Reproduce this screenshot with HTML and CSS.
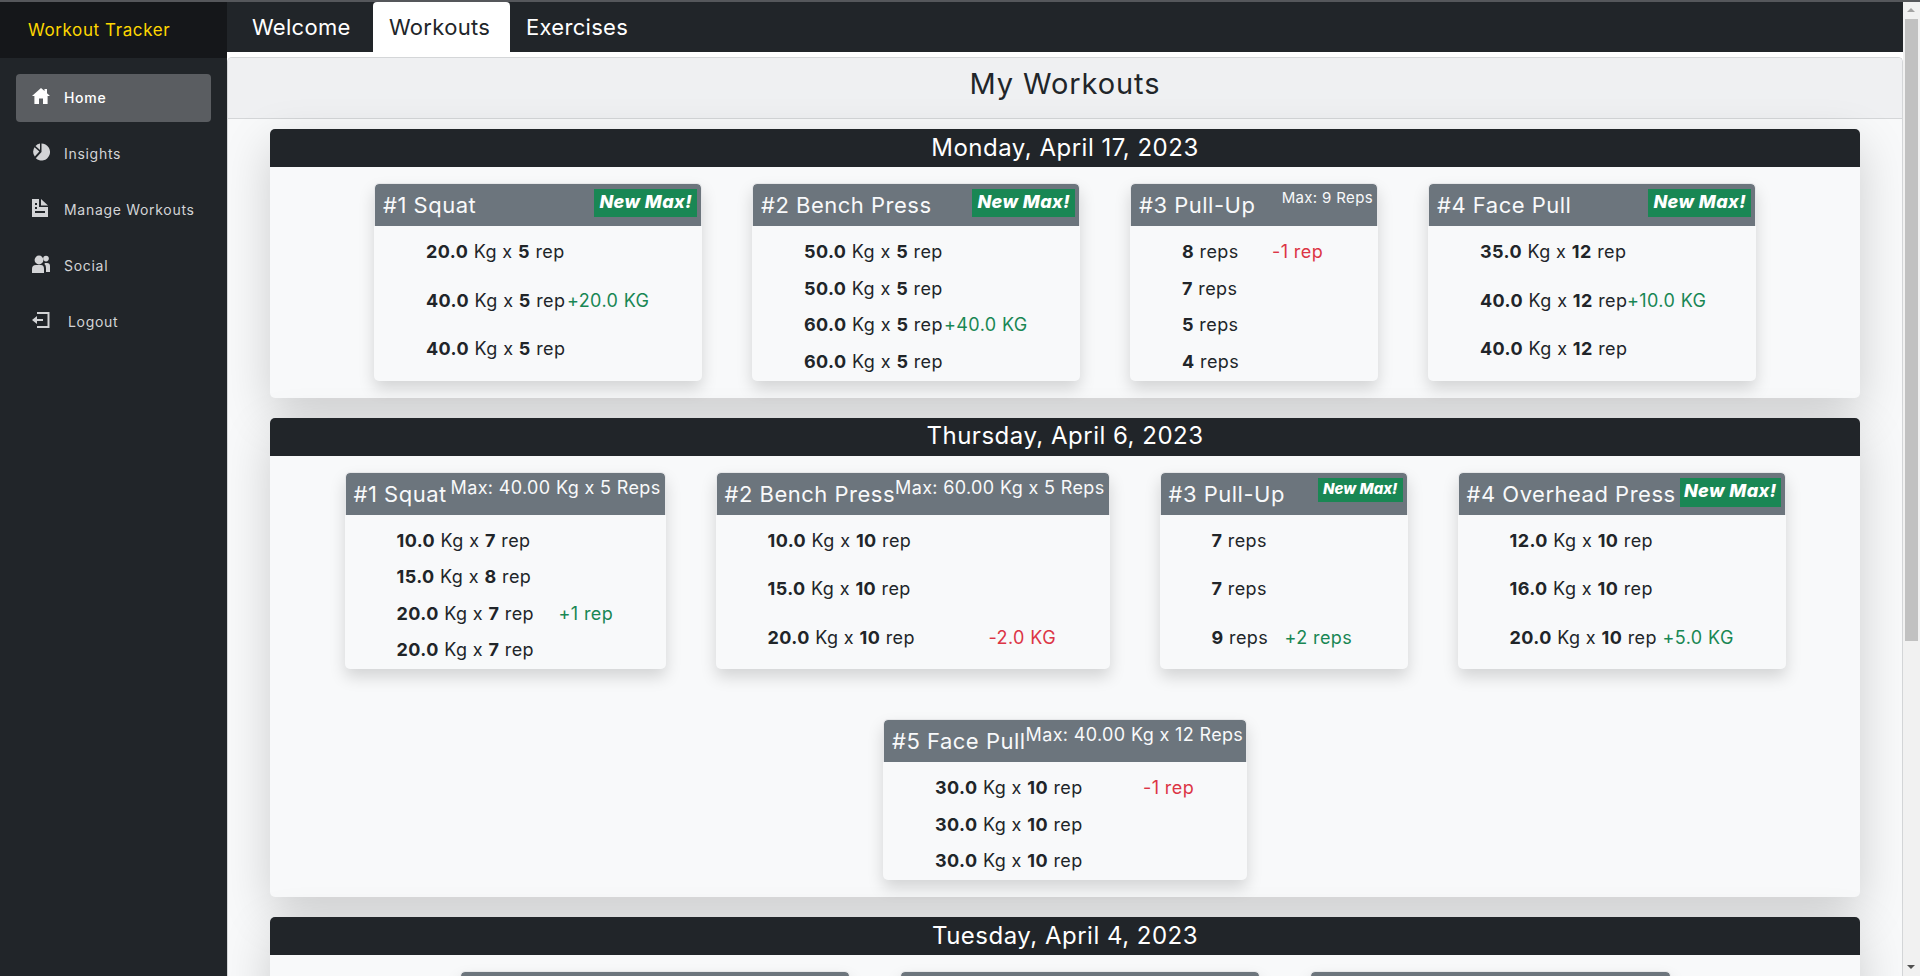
FILE: index.html
```html
<!DOCTYPE html>
<html>
<head>
	<meta charset="UTF-8">
	<title>Workout Tracker</title>
	<link rel="stylesheet" href="styles.css">
</head>
<body>
	<div class="edge"></div>
	<div class="app">
		<aside class="sidebar">
			<div class="brand">Workout Tracker</div>
			<nav class="side-nav">
				<a class="side-link active" href="#">
					<svg class="side-icon" viewBox="0 0 18 18"><path d="M9 1 L12.5 4 V2 H15 V6.2 L18 9 H15.6 V17 H11 V11.5 H7 V17 H2.4 V9 H0 Z"/></svg>
					<span>Home</span>
				</a>
				<a class="side-link" href="#">
					<svg class="side-icon" viewBox="0 0 18 18"><path d="M9.5 0.5 A8.5 8.5 0 1 1 3.8 15.3 L9.5 9 Z"/><path d="M8 0.6 V7 L3.5 3 A8.5 8.5 0 0 1 8 0.6 Z"/><path d="M2.5 4.2 L7.3 8.5 L2.8 13.5 A8.5 8.5 0 0 1 2.5 4.2 Z"/></svg>
					<span>Insights</span>
				</a>
				<a class="side-link" href="#">
					<svg class="side-icon" viewBox="0 0 18 18"><path fill-rule="evenodd" d="M0 0 H7 V8 H16 V18 H0 Z M3 12 V14 H13 V12 Z M3 4 V6 H5 V4 Z M3 8 V10 H5 V8 Z"/><path d="M9 0 L16 6.5 H9 Z"/></svg>
					<span>Manage Workouts</span>
				</a>
				<a class="side-link" href="#">
					<svg class="side-icon" viewBox="0 0 18 18"><circle cx="7" cy="5" r="4.4"/><circle cx="14" cy="3.6" r="2.8"/><path d="M0 18 V14 Q0 10 4 10 H9 Q12 10 12 14 V18 Z"/><path d="M13 8 H15 Q18 8 18 11 V17 H14 V13 Q14 10 12.4 9 Z"/></svg>
					<span>Social</span>
				</a>
				<a class="side-link" href="#">
					<svg class="side-icon" viewBox="0 0 18 18"><path d="M5 1 H17.5 V17 H5 V15 H15.5 V3 H5 Z"/><path d="M0 9 L5 5 V8 H11 V10 H5 V13 Z"/></svg>
					<span class="logout-label">Logout</span>
				</a>
			</nav>
		</aside>

		<main class="main">
			<div class="tab-bar">
				<a class="tab" href="#">Welcome</a>
				<a class="tab active" href="#">Workouts</a>
				<a class="tab" href="#">Exercises</a>
			</div>

			<div class="page">
				<div class="page-head">My Workouts</div>

				<section class="day">
					<h2 class="day-title">Monday, April 17, 2023</h2>
					<div class="day-body">
						<div class="card w-328 rows-even gain-141">
							<div class="card-head"><span class="ex-name">#1 Squat</span><span class="badge">New Max!</span></div>
							<div class="sets">
								<div class="set"><span><b>20.0</b> Kg x <b>5</b> rep</span></div>
								<div class="set"><span><b>40.0</b> Kg x <b>5</b> rep</span><span class="up">+20.0 KG</span></div>
								<div class="set"><span><b>40.0</b> Kg x <b>5</b> rep</span></div>
							</div>
						</div>
						<div class="card w-328 gain-140">
							<div class="card-head"><span class="ex-name">#2 Bench Press</span><span class="badge">New Max!</span></div>
							<div class="sets">
								<div class="set"><span><b>50.0</b> Kg x <b>5</b> rep</span></div>
								<div class="set"><span><b>50.0</b> Kg x <b>5</b> rep</span></div>
								<div class="set"><span><b>60.0</b> Kg x <b>5</b> rep</span><span class="up">+40.0 KG</span></div>
								<div class="set"><span><b>60.0</b> Kg x <b>5</b> rep</span></div>
							</div>
						</div>
						<div class="card w-248 gain-90">
							<div class="card-head"><span class="ex-name">#3 Pull-Up</span><span class="max small">Max: 9 Reps</span></div>
							<div class="sets">
								<div class="set"><span><b>8</b> reps</span><span class="down">-1 rep</span></div>
								<div class="set"><span><b>7</b> reps</span></div>
								<div class="set"><span><b>5</b> reps</span></div>
								<div class="set"><span><b>4</b> reps</span></div>
							</div>
						</div>
						<div class="card w-328 rows-even gain-147">
							<div class="card-head"><span class="ex-name">#4 Face Pull</span><span class="badge">New Max!</span></div>
							<div class="sets">
								<div class="set"><span><b>35.0</b> Kg x <b>12</b> rep</span></div>
								<div class="set"><span><b>40.0</b> Kg x <b>12</b> rep</span><span class="up">+10.0 KG</span></div>
								<div class="set"><span><b>40.0</b> Kg x <b>12</b> rep</span></div>
							</div>
						</div>
					</div>
				</section>

				<section class="day">
					<h2 class="day-title">Thursday, April 6, 2023</h2>
					<div class="day-body">
						<div class="card w-321 gain-162">
							<div class="card-head"><span class="ex-name">#1 Squat</span><span class="max">Max: 40.00 Kg x 5 Reps</span></div>
							<div class="sets">
								<div class="set"><span><b>10.0</b> Kg x <b>7</b> rep</span></div>
								<div class="set"><span><b>15.0</b> Kg x <b>8</b> rep</span></div>
								<div class="set"><span><b>20.0</b> Kg x <b>7</b> rep</span><span class="up">+1 rep</span></div>
								<div class="set"><span><b>20.0</b> Kg x <b>7</b> rep</span></div>
							</div>
						</div>
						<div class="card w-394 rows-even gain-221">
							<div class="card-head"><span class="ex-name">#2 Bench Press</span><span class="max">Max: 60.00 Kg x 5 Reps</span></div>
							<div class="sets">
								<div class="set"><span><b>10.0</b> Kg x <b>10</b> rep</span></div>
								<div class="set"><span><b>15.0</b> Kg x <b>10</b> rep</span></div>
								<div class="set"><span><b>20.0</b> Kg x <b>10</b> rep</span><span class="down">-2.0 KG</span></div>
							</div>
						</div>
						<div class="card w-248 rows-even gain-73">
							<div class="card-head"><span class="ex-name">#3 Pull-Up</span><span class="badge small">New Max!</span></div>
							<div class="sets">
								<div class="set"><span><b>7</b> reps</span></div>
								<div class="set"><span><b>7</b> reps</span></div>
								<div class="set"><span><b>9</b> reps</span><span class="up">+2 reps</span></div>
							</div>
						</div>
						<div class="card w-328 rows-even gain-153">
							<div class="card-head"><span class="ex-name">#4 Overhead Press</span><span class="badge tight">New Max!</span></div>
							<div class="sets">
								<div class="set"><span><b>12.0</b> Kg x <b>10</b> rep</span></div>
								<div class="set"><span><b>16.0</b> Kg x <b>10</b> rep</span></div>
								<div class="set"><span><b>20.0</b> Kg x <b>10</b> rep</span><span class="up">+5.0 KG</span></div>
							</div>
						</div>
						<div class="card w-364 gain-208">
							<div class="card-head"><span class="ex-name">#5 Face Pull</span><span class="max">Max: 40.00 Kg x 12 Reps</span></div>
							<div class="sets">
								<div class="set"><span><b>30.0</b> Kg x <b>10</b> rep</span><span class="down">-1 rep</span></div>
								<div class="set"><span><b>30.0</b> Kg x <b>10</b> rep</span></div>
								<div class="set"><span><b>30.0</b> Kg x <b>10</b> rep</span></div>
							</div>
						</div>
					</div>
				</section>

				<section class="day">
					<h2 class="day-title">Tuesday, April 4, 2023</h2>
					<div class="day-body">
						<div class="card w-390"><div class="card-head"></div></div>
						<div class="card w-360"><div class="card-head"></div></div>
						<div class="card w-361"><div class="card-head"></div></div>
					</div>
				</section>
			</div>
		</main>

		<div class="scrollbar">
			<div class="scroll-arrow"></div>
			<div class="scroll-thumb"></div>
			<div class="scroll-arrow down-arrow"></div>
		</div>
	</div>
</body>
</html>
```

FILE: styles.css
```css
* {
	box-sizing: border-box;
}

html, body {
	height: 100%;
}

body {
	margin: 0;
	overflow: hidden;
	display: flex;
	flex-direction: column;
	background: #fff;
	color: #212529;
	font-family: Inter, "Open Sans", sans-serif;
}

.edge {
	height: 2px;
	flex: none;
	background: #55575b;
}

.app {
	flex: 1;
	min-height: 0;
	display: flex;
}

/* sidebar */
.sidebar {
	width: 227px;
	flex: none;
	background: #212529;
}

.brand {
	height: 56px;
	padding-left: 28px;
	display: flex;
	align-items: center;
	background: #15171a;
	color: #ffd700;
	font-size: 17px;
	letter-spacing: 0.6px;
}

.side-nav {
	padding: 16px;
	display: flex;
	flex-direction: column;
	gap: 8px;
}

.side-link {
	height: 48px;
	padding: 0 0 2px 16px;
	display: flex;
	align-items: center;
	gap: 14px;
	border-radius: 4px;
	color: #d3d4d6;
	font-size: 14px;
	letter-spacing: 0.7px;
	text-decoration: none;
}

.side-link.active {
	background: #5a5d61;
	color: #fff;
	font-weight: 500;
}

.side-icon {
	width: 18px;
	height: 18px;
	flex: none;
	margin-top: -3px;
	fill: currentColor;
}

.logout-label {
	margin-left: 4px;
}

/* main column */
.main {
	flex: 1;
	min-width: 0;
	overflow: hidden;
	background: #fff;
}

.tab-bar {
	height: 50px;
	padding-left: 9px;
	display: flex;
	background: #212529;
}

.tab {
	min-width: 137px;
	padding: 0 16px;
	display: flex;
	align-items: center;
	color: #fff;
	font-size: 22px;
	letter-spacing: 0.3px;
	text-decoration: none;
}

.tab.active {
	border-radius: 4px 4px 0 0;
	background: #fff;
	color: #212529;
}

.page {
	min-height: 100%;
	margin-top: 5px;
	border: 1px solid #d4d6d8;
	border-bottom: none;
	border-radius: 5px 5px 0 0;
	background: #f8f9fa;
}

.page-head {
	height: 61px;
	padding-bottom: 10px;
	display: flex;
	align-items: center;
	justify-content: center;
	border-bottom: 1px solid #d4d6d8;
	border-radius: 4px 4px 0 0;
	background: #eff0f2;
	font-size: 29px;
	letter-spacing: 0.9px;
}

/* one day of workouts */
.day {
	margin: 10px 42px 20px;
	border-radius: 5px;
	background: #f8f9fa;
	box-shadow: 0 16px 48px rgba(0, 0, 0, 0.175);
}

.day-title {
	height: 38px;
	margin: 0;
	padding-bottom: 2px;
	display: flex;
	align-items: center;
	justify-content: center;
	border-radius: 5px 5px 0 0;
	background: #212529;
	color: #fff;
	font-size: 24px;
	font-weight: 400;
	letter-spacing: 0.5px;
}

.day-body {
	padding: 16px 0 17px;
	display: flex;
	flex-wrap: wrap;
	justify-content: center;
	row-gap: 50px;
	column-gap: 50px;
}

.card {
	display: flex;
	flex-direction: column;
	border-radius: 5px;
	background: #f8f9fa;
	box-shadow: 0 8px 16px rgba(0, 0, 0, 0.15);
}

.w-248 { width: 248px; }
.w-321 { width: 321px; }
.w-328 { width: 328px; }
.w-360 { width: 360px; }
.w-361 { width: 361px; }
.w-364 { width: 364px; }
.w-390 { width: 390px; }
.w-394 { width: 394px; }

.card-head {
	height: 43px;
	padding: 2px 4px 2px 8px;
	display: flex;
	justify-content: space-between;
	flex: none;
	border: 1px solid #e6e7e9;
	border-bottom: none;
	border-radius: 5px 5px 0 0;
	background: #6c757d padding-box;
	color: #f8f9fa;
}

.ex-name {
	padding-top: 6px;
	font-size: 22px;
	letter-spacing: 0.5px;
	white-space: nowrap;
}

.badge {
	height: 28px;
	margin-top: 3px;
	padding: 0 5px;
	background: #198754;
	color: #fff;
	font-size: 18px;
	font-style: italic;
	font-weight: 800;
	letter-spacing: 0.4px;
	line-height: 26px;
	white-space: nowrap;
}

.badge.small {
	height: 24px;
	font-size: 15px;
	letter-spacing: 0;
	line-height: 22px;
}

.badge.tight {
	height: 29px;
	padding: 0 4px;
}

.max {
	padding-top: 2px;
	font-size: 18px;
	letter-spacing: 0.35px;
	white-space: nowrap;
}

.max.small {
	font-size: 15px;
}

.sets {
	flex: 1;
	padding: 12px 0 6px 52px;
	display: flex;
	flex-direction: column;
	gap: 9.5px;
	font-size: 18px;
	letter-spacing: 0.4px;
	line-height: 27px;
	white-space: nowrap;
}

.rows-even .sets {
	gap: 21.5px;
}

.set {
	display: grid;
}

.set b {
	font-weight: 700;
}

.gain-73 .set { grid-template-columns: 73px auto; }
.gain-90 .set { grid-template-columns: 90px auto; }
.gain-140 .set { grid-template-columns: 140px auto; }
.gain-141 .set { grid-template-columns: 141px auto; }
.gain-147 .set { grid-template-columns: 147px auto; }
.gain-153 .set { grid-template-columns: 153px auto; }
.gain-162 .set { grid-template-columns: 162px auto; }
.gain-208 .set { grid-template-columns: 208px auto; }
.gain-221 .set { grid-template-columns: 221px auto; }

.up {
	color: #198754;
}

.down {
	color: #dc3545;
}

/* drawn scrollbar, the page itself does not scroll */
.scrollbar {
	width: 17px;
	flex: none;
	display: flex;
	flex-direction: column;
	background: #f1f1f1;
}

.scroll-arrow {
	height: 17px;
	position: relative;
}

.scroll-arrow::after {
	content: "";
	position: absolute;
	left: 4px;
	top: 6px;
	border: 4px solid transparent;
	border-top: none;
	border-bottom: 4px solid #a3a3a3;
}

.down-arrow {
	margin-top: auto;
}

.down-arrow::after {
	border-top: 4px solid #505050;
	border-bottom: none;
}

.scroll-thumb {
	width: 13px;
	height: 622px;
	margin-left: 2px;
	background: #c1c1c1;
}
```
